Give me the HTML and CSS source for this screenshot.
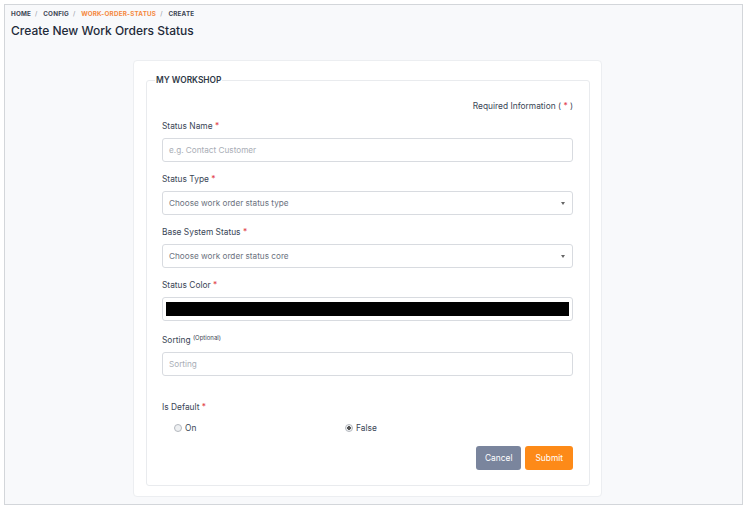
FILE: index.html
```html
<!DOCTYPE html>
<html lang="en">
<head>
  <meta charset="UTF-8">
  <title>Create New Work Orders Status</title>
  <link rel="stylesheet" href="styles.css">
</head>
<body>
  <div class="frame">
    <div class="breadcrumb">
      <span>Home</span><span class="sep">/</span>
      <span>Config</span><span class="sep">/</span>
      <span class="active">Work-order-status</span><span class="sep">/</span>
      <span>Create</span>
    </div>
    <h1 class="page-title">Create New Work Orders Status</h1>

    <div class="card">
      <fieldset class="workshop">
        <legend>My Workshop</legend>
        <div class="required-note">Required Information ( <span class="req">*</span> )</div>

        <div class="field">
          <label>Status Name <span class="req">*</span></label>
          <div class="input placeholder">e.g. Contact Customer</div>
        </div>

        <div class="field">
          <label>Status Type <span class="req">*</span></label>
          <div class="input select placeholder">Choose work order status type<span class="caret"></span></div>
        </div>

        <div class="field">
          <label>Base System Status <span class="req">*</span></label>
          <div class="input select placeholder">Choose work order status core<span class="caret"></span></div>
        </div>

        <div class="field">
          <label>Status Color <span class="req">*</span></label>
          <div class="input color"><div class="swatch"></div></div>
        </div>

        <div class="field">
          <label>Sorting <sup class="optional">(Optional)</sup></label>
          <div class="input placeholder">Sorting</div>
        </div>

        <div class="field default-field">
          <label>Is Default <span class="req">*</span></label>
          <div class="radios">
            <div class="radio"><span class="dot"></span>On</div>
            <div class="radio"><span class="dot checked"></span>False</div>
          </div>
        </div>

        <div class="actions">
          <button class="btn btn-cancel">Cancel</button>
          <button class="btn btn-submit">Submit</button>
        </div>
      </fieldset>
    </div>
  </div>
</body>
</html>
```

FILE: styles.css
```css
body {
  margin: 0;
  background: #fff;
  font-family: Inter, "Noto Sans", sans-serif;
  color: #3a4656;
}

.frame {
  margin: 4px;
  height: 501px;
  box-sizing: border-box;
  border: 1px solid #d3d6da;
  background: #f8f9fb;
  padding: 4px 0 0 6px;
}

.breadcrumb {
  font-size: 6.3px;
  font-weight: 700;
  letter-spacing: 0.2px;
  text-transform: uppercase;
  color: #3d4654;
  line-height: 10px;
}

.breadcrumb .sep {
  margin: 0 4px;
  color: #8a929e;
  font-weight: 400;
}

.breadcrumb .active {
  color: #f5883d;
}

.page-title {
  margin: 3px 0 0;
  font-size: 12px;
  font-weight: 500;
  color: #1f2b3a;
  line-height: 18px;
}

.card {
  margin: 20px 0 0 122px;
  width: 469px;
  height: 437px;
  box-sizing: border-box;
  background: #fff;
  border: 1px solid #eceef1;
  border-radius: 4px;
  padding: 14px 11px 10px 12px;
}

.workshop {
  margin: 0;
  height: 100%;
  box-sizing: border-box;
  border: 1px solid #e9ebee;
  border-radius: 3px;
  padding: 0 16px 0 15px;
}

.workshop legend {
  font-size: 8.4px;
  font-weight: 600;
  text-transform: uppercase;
  color: #2f3947;
  padding: 0 1px;
  margin-left: -7px;
}

.required-note {
  text-align: right;
  font-size: 8.4px;
  line-height: 12px;
  margin-top: 15px;
  color: #3a4656;
}

.req {
  color: #e2434b;
}

.field {
  margin-top: 8px;
}

.field + .field {
  margin-top: 11px;
}

.field label {
  display: block;
  font-size: 8.4px;
  line-height: 12px;
  margin-bottom: 6px;
  color: #3a4656;
}

.optional {
  font-size: 6px;
  vertical-align: 3px;
}

.input {
  position: relative;
  height: 24px;
  box-sizing: border-box;
  border: 1px solid #d8dbe0;
  border-radius: 3px;
  font-size: 8.2px;
  line-height: 22px;
  padding: 0 6px;
}

.placeholder {
  color: #a9aeb6;
}

.select {
  color: #6b7280;
}

.caret {
  position: absolute;
  right: 7px;
  top: 10px;
  border-left: 2.5px solid transparent;
  border-right: 2.5px solid transparent;
  border-top: 3px solid #666;
}

.color {
  padding: 4px 3px;
}

.swatch {
  height: 14px;
  background: #000;
}

.default-field {
  margin-top: 25px !important;
}

.default-field label {
  margin-bottom: 9px;
}

.radios {
  display: grid;
  grid-template-columns: 171px 1fr;
  padding-left: 12px;
  font-size: 8.4px;
  line-height: 12px;
  color: #3a4656;
}

.radio {
  display: flex;
  align-items: center;
  gap: 3px;
}

.dot {
  width: 6px;
  height: 6px;
  border: 1px solid #b5b9bf;
  border-radius: 50%;
  background: #eef0f2;
}

.dot.checked {
  background: radial-gradient(circle, #555 0 1.6px, #eef0f2 2px);
}

.actions {
  display: flex;
  justify-content: flex-end;
  gap: 4px;
  margin-top: 12px;
}

.btn {
  height: 24px;
  border: none;
  border-radius: 3px;
  color: #fff;
  font-family: inherit;
  font-size: 8.4px;
  padding: 0 9px;
}

.btn-cancel {
  background: #7a859d;
}

.btn-submit {
  background: #fd8a18;
  padding: 0 10px;
}
```
